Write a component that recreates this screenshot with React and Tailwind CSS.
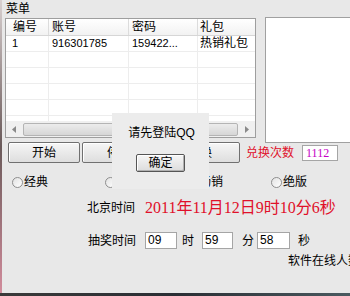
import React from "react";

function Radio({ label, w }) {
  return (
    <div className={"flex items-center h-[14px] " + w}>
      <span className="w-[11px] h-[11px] rounded-full border border-[#8e8e8e] bg-gradient-to-br from-[#e2e2e2] to-white shrink-0" />
      <span className="ml-[1px] text-[12px] leading-[14px] text-black">{label}</span>
    </div>
  );
}

function Btn({ label, w }) {
  return (
    <div className={"h-[21px] border border-[#707070] rounded-[2px] bg-gradient-to-b from-[#f6f6f6] to-[#dedede] shadow-[inset_1px_1px_0_#ffffff] flex items-center justify-center text-[12px] text-black " + w}>
      {label}
    </div>
  );
}

function Field({ value, w, color }) {
  return (
    <div className={"h-[17px] border border-[#a5a5a5] bg-white pl-[2px] text-[12px] leading-[15px] font-['Liberation_Sans',sans-serif] " + w + " " + (color || "text-black")}>
      {value}
    </div>
  );
}

export default function App() {
  const rows = [0, 1, 2, 3, 4, 5];
  return (
    <div className="w-[350px] h-[296px] overflow-hidden flex flex-col bg-[#e8e8e8] font-['Liberation_Sans','Noto_Sans_CJK_SC',sans-serif] text-black relative">
      <div className="flex flex-1 min-h-0">
        <div className="w-[2px] shrink-0 bg-gradient-to-b from-[#d8d0d0] via-[#6a5a5a] to-[#d28c9c]" />
        <div className="flex-1 flex flex-col min-w-0">
          {/* menu */}
          <div className="h-[18px] pl-[4px] text-[12px] leading-[18px]">菜单</div>

          {/* list + box */}
          <div className="flex items-start pl-[3px] h-[125px]">
            <div className="w-[251px] h-[120px] border border-[#9e9e9e] bg-white flex flex-col shrink-0">
              <div className="flex h-[17px] border-b border-[#d6d6d6] bg-gradient-to-b from-white to-[#f2f2f2] text-[12px] leading-[16px]">
                <div className="w-[43px] pl-[7px] border-r border-[#dcdcdc]">编号</div>
                <div className="w-[80px] pl-[3px] border-r border-[#dcdcdc]">账号</div>
                <div className="w-[69px] pl-[3px] border-r border-[#dcdcdc]">密码</div>
                <div className="flex-1 pl-[2px]">礼包</div>
              </div>
              <div className="flex-1 overflow-hidden">
                {rows.map((r) => (
                  <div key={r} className="flex h-[16px] border-b border-[#ededed] text-[12px] leading-[15px]">
                    <div className="w-[43px] pl-[6px] border-r border-[#ededed] font-['Liberation_Sans',sans-serif] text-[11px]">{r === 0 ? "1" : ""}</div>
                    <div className="w-[80px] pl-[3px] border-r border-[#ededed] font-['Liberation_Sans',sans-serif] text-[11px]">{r === 0 ? "916301785" : ""}</div>
                    <div className="w-[69px] pl-[3px] border-r border-[#ededed] font-['Liberation_Sans',sans-serif] text-[11px]">{r === 0 ? "159422..." : ""}</div>
                    <div className="flex-1 pl-[2px]">{r === 0 ? "热销礼包" : ""}</div>
                  </div>
                ))}
              </div>
              {/* scrollbar */}
              <div className="h-[16px] flex items-center bg-[#f0f0f0] px-[1px]">
                <div className="w-[15px] h-[14px] flex items-center justify-center">
                  <svg width="5" height="7" viewBox="0 0 5 7"><path d="M4 0 L0 3.5 L4 7 Z" fill="#8a8a8a" /></svg>
                </div>
                <div className="flex-1 h-[13px] mx-[1px] rounded-[2px] border border-[#b4b4b4] bg-gradient-to-b from-[#ececec] to-[#d6d6d6]" />
                <div className="w-[15px] h-[14px] flex items-center justify-center">
                  <svg width="5" height="7" viewBox="0 0 5 7"><path d="M1 0 L5 3.5 L1 7 Z" fill="#8a8a8a" /></svg>
                </div>
              </div>
            </div>
            <div className="ml-[9px] w-[95px] h-[126px] -mt-[1px] border border-[#a0a0a0] bg-white shrink-0" />
          </div>

          {/* buttons row */}
          <div className="flex items-center -mt-[1px] pl-[6px] h-[21px]">
            <Btn label="开始" w="w-[72px]" />
            <div className="w-[2px]" />
            <Btn label="停止" w="w-[74px]" />
            <div className="w-[4px]" />
            <Btn label="兑换" w="w-[80px]" />
            <span className="ml-[6px] text-[12px] text-[#e0102a] leading-[14px]">兑换次数</span>
            <div className="ml-[8px]">
              <div className="h-[16px] w-[36px] border border-[#a5a5a5] bg-white pl-[3px] text-[12px] leading-[14px] text-[#c400c4] font-['Liberation_Serif',serif]">1112</div>
            </div>
          </div>

          {/* radio row */}
          <div className="flex mt-[12px] pl-[10px]">
            <Radio label="经典" w="w-[93px]" />
            <Radio label="普通" w="w-[82px]" />
            <Radio label="畅销" w="w-[84px]" />
            <Radio label="绝版" w="w-[60px]" />
          </div>

          {/* beijing time */}
          <div className="flex items-center mt-[9px] pl-[85px] h-[20px]">
            <span className="text-[12px] leading-[14px]">北京时间</span>
            <span className="ml-[10px] text-[16px] leading-[20px] text-[#e0102a] font-['Liberation_Serif','Noto_Sans_CJK_SC',serif]">2011年11月12日9时10分6秒</span>
          </div>

          {/* draw time */}
          <div className="flex items-center mt-[14px] pl-[86px] h-[17px] text-[12px]">
            <span className="w-[48px] leading-[14px]">抽奖时间</span>
            <div className="ml-[9px]"><Field value="09" w="w-[32px]" /></div>
            <span className="ml-[5px] leading-[14px]">时</span>
            <div className="ml-[8px]"><Field value="59" w="w-[31px]" /></div>
            <span className="ml-[9px] leading-[14px]">分</span>
            <div className="ml-[3px]"><Field value="58" w="w-[33px]" /></div>
            <span className="ml-[8px] leading-[14px]">秒</span>
          </div>

          {/* online */}
          <div className="mt-[5px] pl-[286px] h-[14px] text-[12px] leading-[14px] whitespace-nowrap">软件在线人数</div>
        </div>
      </div>
      <div className="h-[3px] shrink-0 bg-gradient-to-r from-[#3a3a3a] via-[#2a2e34] to-[#4a5a60]" />

      {/* modal popup */}
      <div className="absolute left-[112px] top-[113px] w-[97px] h-[76px] bg-[#ececec] flex flex-col items-center">
        <div className="mt-[13px] pl-[2px] text-[12px] leading-[14px] font-['Liberation_Sans','Noto_Sans_CJK_SC',sans-serif]">请先登陆QQ</div>
        <div className="mt-[14px] w-[49px] h-[18px] border border-[#555555] rounded-[2px] bg-gradient-to-b from-[#f6f6f6] to-[#dcdcdc] shadow-[inset_1px_1px_0_#ffffff,inset_-1px_-1px_0_#b0b0b0] flex items-center justify-center text-[12px]">确定</div>
      </div>
    </div>
  );
}
